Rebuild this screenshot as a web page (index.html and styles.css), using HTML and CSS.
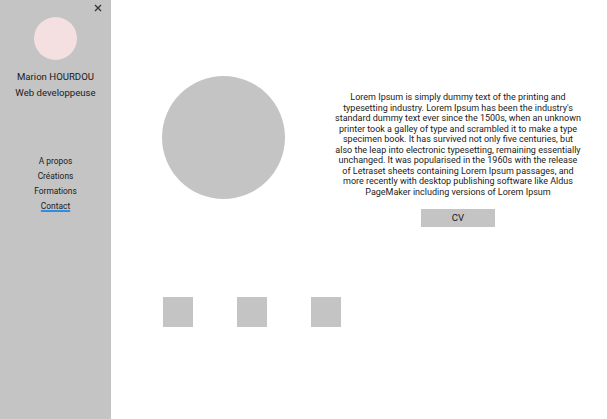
FILE: index.html
```html
<!DOCTYPE html>
<html lang="fr">
<head>
<meta charset="utf-8">
<title>Marion HOURDOU</title>
<link rel="stylesheet" href="styles.css">
</head>
<body>
<aside class="sidebar">
  <button class="close" aria-label="Fermer">
    <svg width="8" height="8" viewBox="0 0 8 8"><path d="M1 1L7 7M7 1L1 7" stroke="#333" stroke-width="1.3" fill="none"/></svg>
  </button>
  <div class="avatar"></div>
  <div class="identity">
    <p>Marion HOURDOU</p>
    <p>Web developpeuse</p>
  </div>
  <nav class="nav">
    <a href="#">A propos</a>
    <a href="#">Créations</a>
    <a href="#">Formations</a>
    <a href="#" class="active">Contact</a>
  </nav>
</aside>
<main class="main">
  <section class="intro">
    <div class="photo"></div>
    <div class="about">
      <p>Lorem Ipsum is simply dummy text of the printing and typesetting industry. Lorem Ipsum has been the industry's standard dummy text ever since the 1500s, when an unknown printer took a galley of type and scrambled it to make a type specimen book. It has survived not only five centuries, but also the leap into electronic typesetting, remaining essentially unchanged. It was popularised in the 1960s with the release of Letraset sheets containing Lorem Ipsum passages, and more recently with desktop publishing software like Aldus PageMaker including versions of Lorem Ipsum</p>
      <a href="#" class="cv">CV</a>
    </div>
  </section>
  <section class="tiles">
    <div class="tile"></div>
    <div class="tile"></div>
    <div class="tile"></div>
  </section>
</main>
</body>
</html>
```
FILE: styles.css
```css
* { box-sizing: border-box; }
html, body { margin: 0; height: 100%; }
body {
  display: flex;
  font-family: Roboto, "Liberation Sans", sans-serif;
  color: #1a1a1a;
  background: #fff;
}
.sidebar {
  position: relative;
  width: 111px;
  flex: none;
  background: #c4c4c4;
  display: flex;
  flex-direction: column;
  align-items: center;
}
.close {
  position: absolute;
  top: 4px;
  left: 94px;
  width: 9px;
  height: 9px;
  padding: 0;
  border: 0;
  background: none;
  display: flex;
}
.avatar {
  margin-top: 17px;
  width: 43px;
  height: 43px;
  border-radius: 50%;
  background: #f4e0e1;
}
.identity {
  margin-top: 9px;
  text-align: center;
  font-size: 9.6px;
  line-height: 16px;
}
.identity p { margin: 0; white-space: nowrap; }
.nav {
  margin-top: 53px;
  display: flex;
  flex-direction: column;
  align-items: center;
  font-size: 8.4px;
  line-height: 15px;
}
.nav a { color: #1a1a1a; text-decoration: none; }
.nav a.active {
  text-decoration: underline;
  text-decoration-color: #2d8ee3;
  text-decoration-thickness: 2px;
  text-underline-offset: 1px;
}
.main {
  flex: 1;
  padding: 76px 0 0 51px;
}
.intro {
  display: flex;
  align-items: flex-start;
  gap: 50px;
}
.photo {
  width: 123px;
  height: 123px;
  border-radius: 50%;
  background: #c4c4c4;
  flex: none;
}
.about {
  margin-top: 16px;
  width: 246px;
  display: flex;
  flex-direction: column;
  align-items: center;
  text-align: center;
  font-size: 9px;
  line-height: 10.5px;
}
.about p { margin: 0; }
.cv {
  margin-top: 12px;
  width: 74px;
  height: 18px;
  background: #c4c4c4;
  color: #1a1a1a;
  text-decoration: none;
  display: flex;
  align-items: center;
  justify-content: center;
  font-size: 9.6px;
}
.tiles {
  margin-top: 70px;
  margin-left: 1px;
  display: flex;
  gap: 44px;
}
.tile {
  width: 30px;
  height: 30px;
  background: #c4c4c4;
}
```
